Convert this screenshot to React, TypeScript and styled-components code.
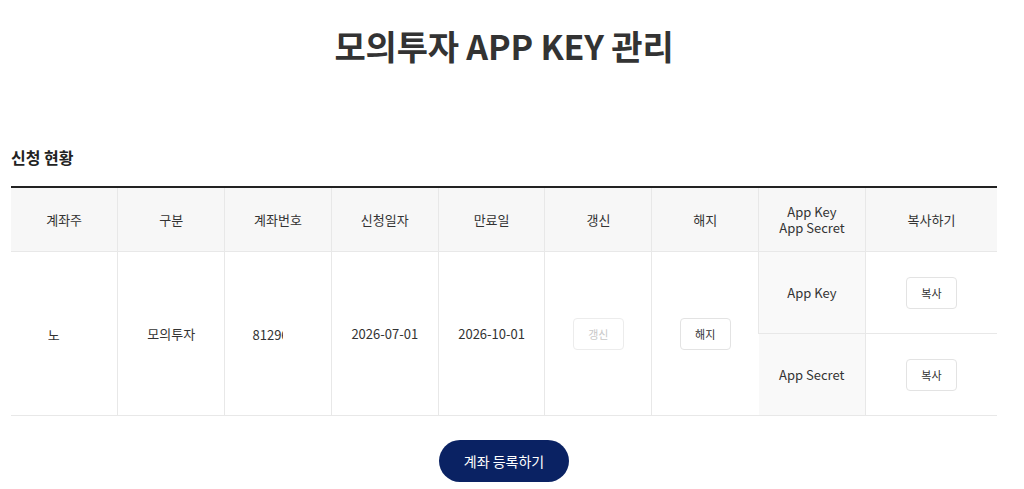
import React from 'react';
import styled, { createGlobalStyle } from 'styled-components';

const GlobalStyle = createGlobalStyle`
    body {
        margin: 0;
        background: #fff;
        font-family: 'Noto Sans CJK KR', 'Noto Sans', sans-serif;
        color: #333;
    }
`

const Page = styled.div`
    width: 1024px;
    padding: 22px 27px 0 11px;
    box-sizing: border-box;
`

const Title = styled.h1`
    margin: 0;
    text-align: center;
    font-size: 34px;
    font-weight: 700;
    line-height: 48px;
    color: #333;
    letter-spacing: -0.2px;
`

const SubTitle = styled.h2`
    margin: 77px 0 19px;
    font-size: 16px;
    font-weight: 700;
    line-height: 20px;
    color: #222;
`

const Table = styled.table`
    width: 986px;
    border-collapse: collapse;
    table-layout: fixed;
    border-top: 2px solid #222;
    font-size: 13px;
    color: #333;
`

const Th = styled.th`
    height: 63px;
    padding: 0;
    background: #f7f7f7;
    font-weight: 400;
    line-height: 16px;
    border-left: 1px solid #e8e8e8;
    border-bottom: 1px solid #e8e8e8;
    &:first-child { border-left: none; }
`

const Td = styled.td<{ $gray?: boolean }>`
    height: 81px;
    padding: 0;
    text-align: center;
    border-left: 1px solid #e8e8e8;
    border-bottom: 1px solid #e8e8e8;
    background: ${p => (p.$gray ? '#f9f9f9' : '#fff')};
    &:first-child { border-left: none; }
`

const Clip = styled.span<{ $w: number }>`
    display: inline-block;
    width: ${p => p.$w}px;
    overflow: hidden;
    white-space: nowrap;
    vertical-align: middle;
    text-align: left;
`

const SmallButton = styled.button`
    width: 51px;
    height: 32px;
    border: 1px solid #e3e3e3;
    border-radius: 4px;
    background: #fff;
    font-family: inherit;
    font-size: 11px;
    color: #333;
    cursor: pointer;
    &:disabled {
        color: #c8c8c8;
        border-color: #ececec;
        cursor: default;
    }
`

const Footer = styled.div`
    display: flex;
    justify-content: center;
    padding-top: 24px;
`

const RegisterButton = styled.button`
    width: 130px;
    height: 42px;
    border: none;
    border-radius: 21px;
    background: #0a2263;
    color: #fff;
    font-family: inherit;
    font-size: 14px;
    cursor: pointer;
`

const headers = ['계좌주', '구분', '계좌번호', '신청일자', '만료일', '갱신', '해지'];

function App() {
    return (
        <Page>
            <GlobalStyle />
            <Title>모의투자 APP KEY 관리</Title>
            <SubTitle>신청 현황</SubTitle>
            <Table>
                <colgroup>
                    {headers.map(h => <col key={h} style={{ width: 106.8 }} />)}
                    <col style={{ width: 106.8 }} />
                    <col />
                </colgroup>
                <thead>
                    <tr>
                        {headers.map(h => <Th key={h}>{h}</Th>)}
                        <Th>App Key<br />App Secret</Th>
                        <Th>복사하기</Th>
                    </tr>
                </thead>
                <tbody>
                    <tr>
                        <Td rowSpan={2}><Clip $w={33}>노</Clip></Td>
                        <Td rowSpan={2}>모의투자</Td>
                        <Td rowSpan={2}><Clip $w={31}>81296</Clip><Clip $w={20}></Clip></Td>
                        <Td rowSpan={2}>2026-07-01</Td>
                        <Td rowSpan={2}>2026-10-01</Td>
                        <Td rowSpan={2}><SmallButton disabled>갱신</SmallButton></Td>
                        <Td rowSpan={2}><SmallButton>해지</SmallButton></Td>
                        <Td $gray>App Key</Td>
                        <Td><SmallButton>복사</SmallButton></Td>
                    </tr>
                    <tr>
                        <Td $gray>App Secret</Td>
                        <Td><SmallButton>복사</SmallButton></Td>
                    </tr>
                </tbody>
            </Table>
            <Footer>
                <RegisterButton>계좌 등록하기</RegisterButton>
            </Footer>
        </Page>
    );
}

export default App;
